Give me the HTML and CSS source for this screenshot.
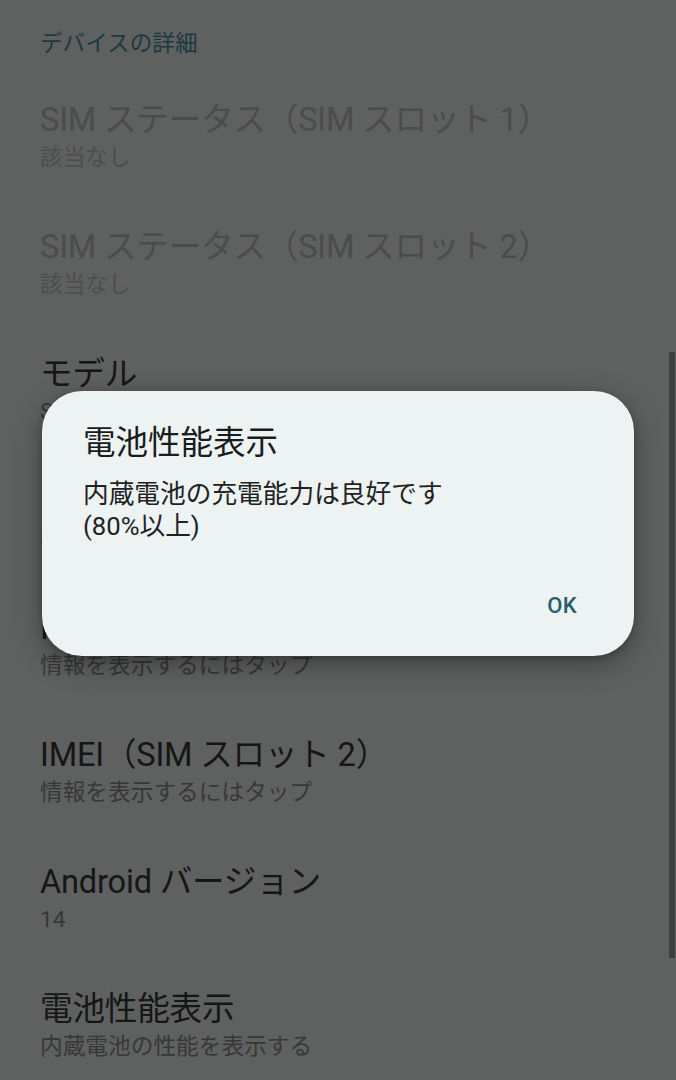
FILE: index.html
```html
<!DOCTYPE html>
<html lang="ja">
<head>
<meta charset="utf-8">
<title>デバイスの詳細</title>
<link rel="stylesheet" href="styles.css">
</head>
<body>
<main class="screen">
  <h2 class="section-header">デバイスの詳細</h2>
  <ul class="pref-list">
    <li class="pref disabled">
      <div class="pref-title">SIM ステータス（SIM スロット 1）</div>
      <div class="pref-summary">該当なし</div>
    </li>
    <li class="pref disabled">
      <div class="pref-title">SIM ステータス（SIM スロット 2）</div>
      <div class="pref-summary">該当なし</div>
    </li>
    <li class="pref">
      <div class="pref-title">モデル</div>
      <div class="pref-summary">SO-51D</div>
    </li>
    <li class="pref">
      <div class="pref-title">EID</div>
      <div class="pref-summary">8904</div>
    </li>
    <li class="pref">
      <div class="pref-title">IMEI（SIM スロット 1）</div>
      <div class="pref-summary">情報を表示するにはタップ</div>
    </li>
    <li class="pref">
      <div class="pref-title">IMEI（SIM スロット 2）</div>
      <div class="pref-summary">情報を表示するにはタップ</div>
    </li>
    <li class="pref">
      <div class="pref-title">Android バージョン</div>
      <div class="pref-summary">14</div>
    </li>
    <li class="pref">
      <div class="pref-title">電池性能表示</div>
      <div class="pref-summary">内蔵電池の性能を表示する</div>
    </li>
  </ul>
  <div class="scrollbar"></div>
</main>
<div class="dialog" role="dialog">
  <div class="dialog-title">電池性能表示</div>
  <div class="dialog-body">内蔵電池の充電能力は良好です<br>(80%以上)</div>
  <div class="dialog-actions">
    <button class="dialog-btn">OK</button>
  </div>
</div>
</body>
</html>
```
FILE: styles.css
```css
* { box-sizing: border-box; }
html, body {
  margin: 0;
  padding: 0;
  background: #5f6060;
  width: 676px;
  height: 1080px;
  overflow: hidden;
}
body {
  font-family: Roboto, "Noto Sans CJK JP", sans-serif;
  position: relative;
}
.screen {
  position: relative;
  height: 1080px;
}
.section-header {
  margin: 0;
  padding: 29px 0 0 40px;
  height: 59px;
  font-size: 22.6px;
  line-height: 30px;
  font-weight: 400;
  color: #1b3a40;
  margin-bottom: 14px;
}
.pref-list {
  list-style: none;
  margin: 0;
  padding: 0;
}
.pref {
  padding: 27px 40px 26px 40px;
  height: 127px;
  white-space: nowrap;
  overflow: hidden;
}
.pref-title {
  font-size: 32.6px;
  line-height: 40px;
  color: #151616;
  letter-spacing: -0.2px;
}
.pref-summary {
  font-size: 22.7px;
  line-height: 35px;
  color: #363838;
}
.pref.disabled .pref-title { color: #4b4c4c; }
.pref.disabled .pref-summary { color: #4d4e4e; }
.scrollbar {
  position: absolute;
  right: 1px;
  top: 352px;
  width: 6px;
  height: 606px;
  background: #3e3f3f;
}
.dialog {
  position: absolute;
  left: 42px;
  top: 391px;
  width: 592px;
  height: 265px;
  background: #edf2f2;
  border-radius: 40px;
  box-shadow: 0 8px 28px rgba(0, 0, 0, 0.35), 0 2px 6px rgba(0,0,0,0.2);
  padding: 32px 57px 30px 41px;
  display: flex;
  flex-direction: column;
}
.dialog-title {
  font-size: 32.5px;
  line-height: 40px;
  color: #191c1c;
}
.dialog-body {
  margin-top: 15px;
  font-size: 25.7px;
  line-height: 32px;
  color: #1e2222;
}
.dialog-actions {
  margin-top: auto;
  display: flex;
  justify-content: flex-end;
}
.dialog-btn {
  border: none;
  background: none;
  padding: 0;
  font-family: Roboto, "Noto Sans CJK JP", sans-serif;
  font-size: 22px;
  font-weight: 500;
  line-height: 40px;
  color: #285f6b;
  letter-spacing: 0.3px;
}
```
